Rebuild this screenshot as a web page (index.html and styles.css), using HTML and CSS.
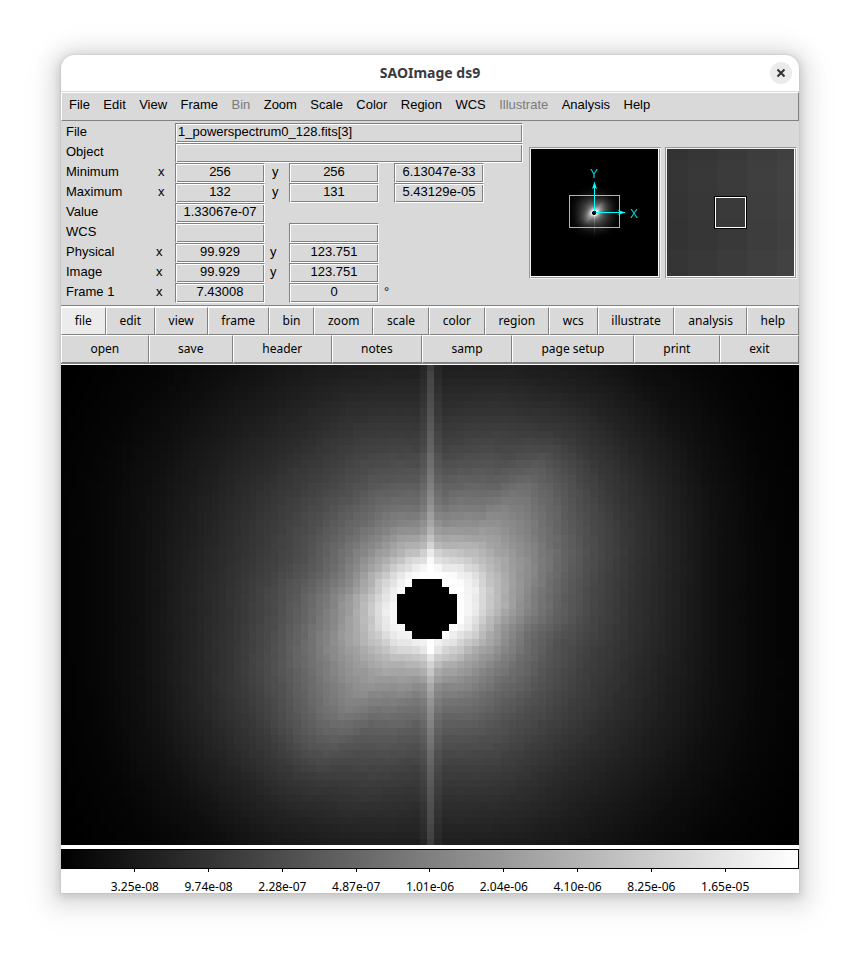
FILE: index.html
```html
<!DOCTYPE html>
<html lang="en">
<head>
<meta charset="utf-8">
<title>SAOImage ds9</title>
<link rel="stylesheet" href="styles.css">
</head>
<body>
<main class="window">
  <header class="titlebar">
    <h1 class="title">SAOImage ds9</h1>
    <button class="close" type="button" aria-label="Close">
      <svg viewBox="0 0 10 10" width="10" height="10" aria-hidden="true"><path d="M1.5 1.5 8.5 8.5M8.5 1.5 1.5 8.5"/></svg>
    </button>
  </header>

  <nav class="menubar">
    <button type="button">File</button>
    <button type="button">Edit</button>
    <button type="button">View</button>
    <button type="button">Frame</button>
    <button type="button" disabled>Bin</button>
    <button type="button">Zoom</button>
    <button type="button">Scale</button>
    <button type="button">Color</button>
    <button type="button">Region</button>
    <button type="button">WCS</button>
    <button type="button" disabled>Illustrate</button>
    <button type="button">Analysis</button>
    <button type="button">Help</button>
  </nav>

  <section class="info">
    <div class="fields">
      <div class="row"><label class="name" for="f-file">File</label><input class="wide" id="f-file" readonly value="1_powerspectrum0_128.fits[3]"></div>
      <div class="row"><label class="name" for="f-object">Object</label><input class="wide" id="f-object" readonly></div>
      <div class="row"><span class="name">Minimum</span><label class="axis" for="min-x">x</label><input id="min-x" readonly value="256"><label class="axis" for="min-y">y</label><input id="min-y" readonly value="256"><input class="extra" aria-label="Minimum value" readonly value="6.13047e-33"></div>
      <div class="row"><span class="name">Maximum</span><label class="axis" for="max-x">x</label><input id="max-x" readonly value="132"><label class="axis" for="max-y">y</label><input id="max-y" readonly value="131"><input class="extra" aria-label="Maximum value" readonly value="5.43129e-05"></div>
      <div class="row"><label class="name" for="f-value">Value</label><input class="first" id="f-value" readonly value="1.33067e-07"></div>
      <div class="row"><span class="name">WCS</span><input class="first" aria-label="WCS x" readonly><input class="second" aria-label="WCS y" readonly></div>
      <div class="row coord"><span class="name">Physical</span><label class="axis" for="phy-x">x</label><input id="phy-x" readonly value="99.929"><label class="axis" for="phy-y">y</label><input id="phy-y" readonly value="123.751"></div>
      <div class="row coord"><span class="name">Image</span><label class="axis" for="img-x">x</label><input id="img-x" readonly value="99.929"><label class="axis" for="img-y">y</label><input id="img-y" readonly value="123.751"></div>
      <div class="row coord"><span class="name">Frame 1</span><label class="axis" for="frm-x">x</label><input id="frm-x" readonly value="7.43008"><input class="second" aria-label="Rotation" readonly value="0"><span class="unit">°</span></div>
    </div>
    <div class="inset">
      <canvas id="panner" width="128" height="128"></canvas>
      <svg class="overlay" viewBox="0 0 128 128" width="128" height="128">
        <rect class="cyan-line" x="38.5" y="46.5" width="50" height="32"/>
        <path class="cyan-line" d="M63.5 64V34M63 63.5H94"/>
        <path class="cyan-fill" d="M63.500 32.500 66 40 63.500 38.500 61 40ZM94.500 63.500 87 66 88.500 63.500 87 61Z"/>
        <circle cx="63" cy="64" r="2"/>
        <text x="59" y="29">Y</text>
        <text x="99" y="69">X</text>
      </svg>
    </div>
    <div class="inset">
      <canvas id="magnifier" width="128" height="128"></canvas>
      <svg class="overlay" viewBox="0 0 128 128" width="128" height="128">
        <rect class="black-line" x="47.5" y="47.5" width="32" height="32"/>
        <rect class="white-line" x="48.5" y="48.5" width="30" height="30"/>
      </svg>
    </div>
  </section>

  <div class="toolbars">
    <div class="toolbar">
      <button class="active" type="button">file</button>
      <button type="button">edit</button>
      <button type="button">view</button>
      <button type="button">frame</button>
      <button type="button">bin</button>
      <button type="button">zoom</button>
      <button type="button">scale</button>
      <button type="button">color</button>
      <button type="button">region</button>
      <button type="button">wcs</button>
      <button type="button">illustrate</button>
      <button type="button">analysis</button>
      <button type="button">help</button>
    </div>
    <div class="toolbar">
      <button type="button">open</button>
      <button type="button">save</button>
      <button type="button">header</button>
      <button type="button">notes</button>
      <button type="button">samp</button>
      <button type="button">page setup</button>
      <button type="button">print</button>
      <button type="button">exit</button>
    </div>
  </div>

  <section class="view"><canvas id="frame"></canvas></section>

  <footer class="colorbar">
    <div class="ramp"></div>
    <div class="scale">
      <span>3.25e-08</span><span>9.74e-08</span><span>2.28e-07</span><span>4.87e-07</span><span>1.01e-06</span><span>2.04e-06</span><span>4.10e-06</span><span>8.25e-06</span><span>1.65e-05</span>
    </div>
  </footer>
</main>
<script src="spectrum.js"></script>
</body>
</html>
```
FILE: styles.css
```css
* { box-sizing: border-box; }

body {
  margin: 0;
  min-height: 100vh;
  padding: 55px 61px 67px;
  display: flex;
  background: #fff;
  color: #000;
  font: 13px/20px "Liberation Sans", Arial, sans-serif;
}

button, input { font: inherit; color: inherit; margin: 0; border-radius: 0; }
canvas { display: block; }

.window {
  flex: 1;
  min-width: 0;
  display: flex;
  flex-direction: column;
  border-radius: 14px 14px 0 0;
  background: #d9d9d9;
  box-shadow: 0 0 0 1px rgba(0,0,0,.03), 0 2px 8px 2px rgba(0,0,0,.13), 0 3px 20px 10px rgba(0,0,0,.09), 0 6px 32px 16px rgba(0,0,0,.04);
}

.titlebar {
  display: grid;
  grid-template-columns: 1fr auto 1fr;
  align-items: center;
  height: 37px;
  padding: 0 7px;
  border-radius: 14px 14px 0 0;
  border-bottom: 1px solid #dcdcdc;
  background: #fff;
}
.title {
  grid-column: 2;
  margin: 0;
  font: 700 14px/20px "Noto Sans", sans-serif;
  color: #3a3a3e;
}
.close {
  justify-self: end;
  display: grid;
  place-items: center;
  width: 22px;
  height: 22px;
  padding: 0;
  border: 0;
  border-radius: 50%;
  background: #ebebeb;
}
.close path { stroke: #2e3236; stroke-width: 2; fill: none; }

.menubar {
  display: flex;
  justify-content: space-between;
  height: 29px;
  padding: 0 20% 4px 7px;
  border: 1px solid;
  border-color: #fff #828282 #828282 #fff;
}
.menubar button { padding: 0; border: 0; background: none; }
.menubar button:disabled { color: #7b7b7b; }

.info {
  display: flex;
  align-items: center;
  gap: 4px;
  height: 184px;
  padding: 0 2px 0 5px;
}
.fields { flex: 1; min-width: 0; padding-right: 2px; }
.row {
  display: grid;
  grid-template-columns: 82px 27px 90px 24px 90px 15px 90px 1fr;
  height: 20px;
}
.name { grid-column: 1; line-height: 18px; }
.axis { padding-left: 10px; line-height: 18px; }
.coord .axis { padding-left: 8px; }
.axis + input + .axis { padding-left: 7px; }
.coord .axis + input + .axis { padding-left: 5px; }
.row input {
  width: 100%;
  min-width: 0;
  height: 20px;
  padding: 0 2px 2px;
  border: 1px solid;
  border-color: #828282 #fff #fff #828282;
  box-shadow: inset 1px 1px #fff, inset -1px -1px #828282;
  background: none;
  text-align: center;
  outline: 0;
}
.row .wide { grid-column: 3 / -1; text-align: left; }
.row .first { grid-column: 3; }
.row .second { grid-column: 5; }
.row .extra { grid-column: 7; }
.unit { grid-column: 6; padding-left: 5px; line-height: 18px; }

.inset {
  position: relative;
  flex: none;
  padding: 1px;
  border: 1px solid;
  border-color: #999 #eee #eee #999;
  box-shadow: inset 1px 1px #eee, inset -1px -1px #999;
}
.overlay { position: absolute; inset: 1px; box-shadow: inset -1px -1px #fff; }
.cyan-line { fill: none; stroke: #0ff; }
.cyan-fill, .overlay text { fill: #0ff; }
.overlay text { font: 12px "Liberation Sans", Arial, sans-serif; opacity: .85; }
.black-line { fill: none; stroke: #000; }
.white-line { fill: none; stroke: #fff; }

.toolbars {
  border-top: 1px solid #828282;
  border-bottom: 1px solid #fff;
  box-shadow: inset 0 1px #fff, inset 0 -1px #828282;
  padding: 1px 0;
  font: 12px/20px "Noto Sans", sans-serif;
}
.toolbar { display: flex; }
.toolbar button {
  flex: 1 1 auto;
  height: 28px;
  padding: 0 3px;
  border: 1px solid;
  border-color: #fff #828282 #828282 #fff;
  background: #d9d9d9;
}
.toolbar .active { background: #ececec; }

.view { position: relative; flex: 1; min-height: 240px; background: #000; }
#frame { position: absolute; inset: 0; width: 100%; height: 100%; }

.colorbar { padding-top: 4px; background: #fff; }
.ramp {
  height: 20px;
  border: 1px solid #000;
  border-left: 0;
  background: linear-gradient(to right, #000, #fff);
}
.scale {
  display: flex;
  height: 24px;
  padding: 0 5%;
  font: 12px/14px "Noto Sans", sans-serif;
}
.scale span { flex: 1; text-align: center; }
.scale span::before {
  content: "";
  display: block;
  width: 1px;
  height: 3px;
  margin: 0 auto 8px;
  background: #000;
}
```
FILE: spectrum.js
```js
// Grey levels of the power spectrum, by angle (degrees) and radius (pixels).
const RADII = [0, 30, 45, 60, 80, 100, 130, 160, 200, 240, 290, 340, 400];
const PROFILES = [
  [0,   [255, 255, 235, 200, 160, 128, 95, 72, 50, 34, 15, 5, 0]],
  [25,  [255, 255, 238, 200, 166, 142, 108, 82, 56, 37, 17, 5, 0]],
  [50,  [255, 255, 230, 192, 162, 144, 120, 94, 58, 35, 15, 5, 0]],
  [65,  [255, 255, 222, 182, 150, 126, 96, 74, 52, 32, 15, 5, 0]],
  [90,  [255, 250, 218, 176, 136, 110, 85, 64, 45, 30, 16, 6, 0]],
  [110, [255, 255, 218, 176, 138, 112, 85, 66, 46, 30, 15, 4, 0]],
  [130, [255, 255, 212, 168, 132, 106, 80, 62, 42, 28, 14, 4, 0]],
  [160, [255, 255, 225, 182, 138, 108, 80, 63, 46, 31, 16, 6, 0]],
  [180, [255, 255, 235, 200, 160, 128, 95, 72, 50, 34, 15, 5, 0]]
];
const CELL = 7.43;

function along(values, r) {
  for (let i = 1; i < RADII.length; i++) {
    if (r < RADII[i]) {
      const t = (r - RADII[i - 1]) / (RADII[i] - RADII[i - 1]);
      return values[i - 1] + (values[i] - values[i - 1]) * t;
    }
  }
  return 0;
}

// Level at an offset from the centre, y pointing up.
// The contours are slightly squared, so the radius uses a 2.5 norm.
function level(x, y) {
  const r = Math.pow(Math.pow(Math.abs(x), 2.5) + Math.pow(Math.abs(y), 2.5), 0.4);
  let a = Math.atan2(y, x) * 180 / Math.PI;
  if (a < 0) a += 180;
  let k = 1;
  while (k < PROFILES.length - 1 && a > PROFILES[k][0]) k++;
  const [a0, p0] = PROFILES[k - 1];
  const [a1, p1] = PROFILES[k];
  const s = (a - a0) / (a1 - a0);
  const t = s * s * (3 - 2 * s);
  return along(p0, r) * (1 - t) + along(p1, r) * t;
}

function cellLevel(i, j) {
  // Masked disc, eight cells wide, with stepped corners.
  const dx = Math.abs(i + 0.5), dy = Math.abs(j - 0.5);
  if (dx < 4 && dy < 4 && dx + dy < 6) return 0;
  let v = level(i * CELL, -j * CELL);
  const n = Math.sin(i * 12.9898 + j * 78.233) * 43758.5453;
  v *= 1 + (n - Math.floor(n) - 0.5) * 0.03;
  if (i === 0) v += Math.min(34, v);
  else if (Math.abs(i) === 1) v += Math.min(8, v * 0.25);
  return Math.max(0, Math.min(255, Math.round(v)));
}

function drawFrame() {
  const c = document.getElementById("frame");
  const w = c.width = c.clientWidth, h = c.height = c.clientHeight;
  const g = c.getContext("2d");
  const cx = w / 2 - 3, cy = h / 2 - 3;
  const ni = Math.ceil(cx / CELL) + 1, nj = Math.ceil(cy / CELL) + 2;
  for (let j = -nj; j <= nj; j++) {
    const y0 = Math.floor(cy + j * CELL), y1 = Math.floor(cy + (j + 1) * CELL);
    for (let i = -ni; i <= ni; i++) {
      const x0 = Math.round(cx + i * CELL), x1 = Math.round(cx + (i + 1) * CELL);
      const v = cellLevel(i, j);
      g.fillStyle = `rgb(${v},${v},${v})`;
      g.fillRect(x0, y0, x1 - x0, y1 - y0);
    }
  }
}

function drawPanner() {
  const g = document.getElementById("panner").getContext("2d");
  for (let y = 0; y < 128; y++) {
    for (let x = 0; x < 128; x++) {
      const v = cellLevel((x - 63) * 2, (y - 63) * 2);
      g.fillStyle = `rgb(${v},${v},${v})`;
      g.fillRect(x, y, 1, 1);
    }
  }
}

function drawMagnifier() {
  const g = document.getElementById("magnifier").getContext("2d");
  const xs = [0, 21, 51, 80, 110, 128], ys = [0, 12, 42, 70, 101, 128];
  const base = [52, 55, 58, 62, 65];
  for (let j = 0; j < 5; j++) {
    for (let i = 0; i < 5; i++) {
      const v = base[i] + (i * 3 + j * 2) % 3 - 1;
      g.fillStyle = `rgb(${v},${v},${v})`;
      g.fillRect(xs[i], ys[j], xs[i + 1] - xs[i], ys[j + 1] - ys[j]);
    }
  }
}

drawFrame();
drawPanner();
drawMagnifier();
window.addEventListener("resize", drawFrame);
```
